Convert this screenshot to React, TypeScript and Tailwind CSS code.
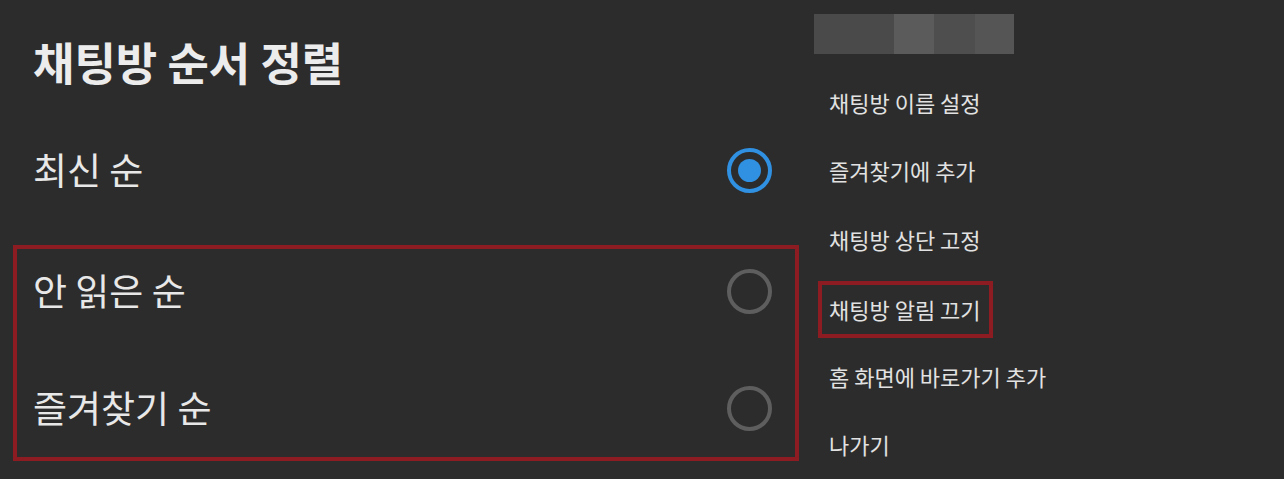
const font = { fontFamily: '"Noto Sans CJK KR", "Noto Sans", sans-serif' };

const sortOptions = [
  { label: '안 읽은 순', checked: false },
  { label: '즐겨찾기 순', checked: false },
];

const menuItems = [
  '채팅방 이름 설정',
  '즐겨찾기에 추가',
  '채팅방 상단 고정',
  '채팅방 알림 끄기',
  '홈 화면에 바로가기 추가',
  '나가기',
];

function Radio({ checked }: { checked: boolean }) {
  if (checked) {
    return (
      <div className="flex h-[45px] w-[45px] items-center justify-center rounded-full border-[4px] border-[#3090e2]">
        <div className="h-[23px] w-[23px] rounded-full bg-[#3090e2]" />
      </div>
    );
  }
  return <div className="h-[45px] w-[45px] rounded-full border-[4px] border-[#5e5e5e]" />;
}

function SortRow({ label, checked, className }: { label: string; checked: boolean; className: string }) {
  return (
    <div className={`flex items-center justify-between ${className}`}>
      <span className="text-[37px] text-[#e8e8e8]">{label}</span>
      <Radio checked={checked} />
    </div>
  );
}

export default function App() {
  return (
    <div className="flex h-[479px] w-[1284px] overflow-hidden bg-[#2c2c2c]" style={font}>
      <div className="w-[800px] shrink-0">
        <div className="flex h-[124px] items-center pl-[33px]">
          <h1 className="text-[45px] font-bold text-[#ececec]">채팅방 순서 정렬</h1>
        </div>
        <SortRow label="최신 순" checked className="h-[92px] pl-[33px] pr-[28px]" />
        <div className="ml-[13px] mr-[1px] mt-[29px] border-[4px] border-[#8d1b22] pb-[9px] pl-[16px] pr-[23px] pt-[2px]">
          <SortRow label={sortOptions[0].label} checked={sortOptions[0].checked} className="h-[80px]" />
          <SortRow label={sortOptions[1].label} checked={sortOptions[1].checked} className="mt-[37px] h-[80px]" />
        </div>
      </div>

      <div className="flex-1 pl-[14px] pt-[14px]">
        <div className="flex h-[40px] w-[200px]">
          <div className="w-[80px] bg-[#4a4a4a]" />
          <div className="w-[40px] bg-[#5b5b5b]" />
          <div className="w-[41px] bg-[#4e4e4e]" />
          <div className="w-[39px] bg-[#555555]" />
        </div>
        <ul className="mt-[14px]">
          {menuItems.map((item, i) =>
            i === 3 ? (
              <li key={item} className="flex h-[68.5px] items-center pl-[4px]">
                <div className="mt-[3px] flex h-[57px] w-[175px] items-center border-[4px] border-[#8d1b22] pl-[7px]">
                  <span className="text-[22px] text-[#e2e2e2]">{item}</span>
                </div>
              </li>
            ) : (
              <li key={item} className="flex h-[68.5px] items-center pl-[15px]">
                <span className="text-[22px] text-[#e2e2e2]">{item}</span>
              </li>
            ),
          )}
        </ul>
      </div>
    </div>
  );
}
